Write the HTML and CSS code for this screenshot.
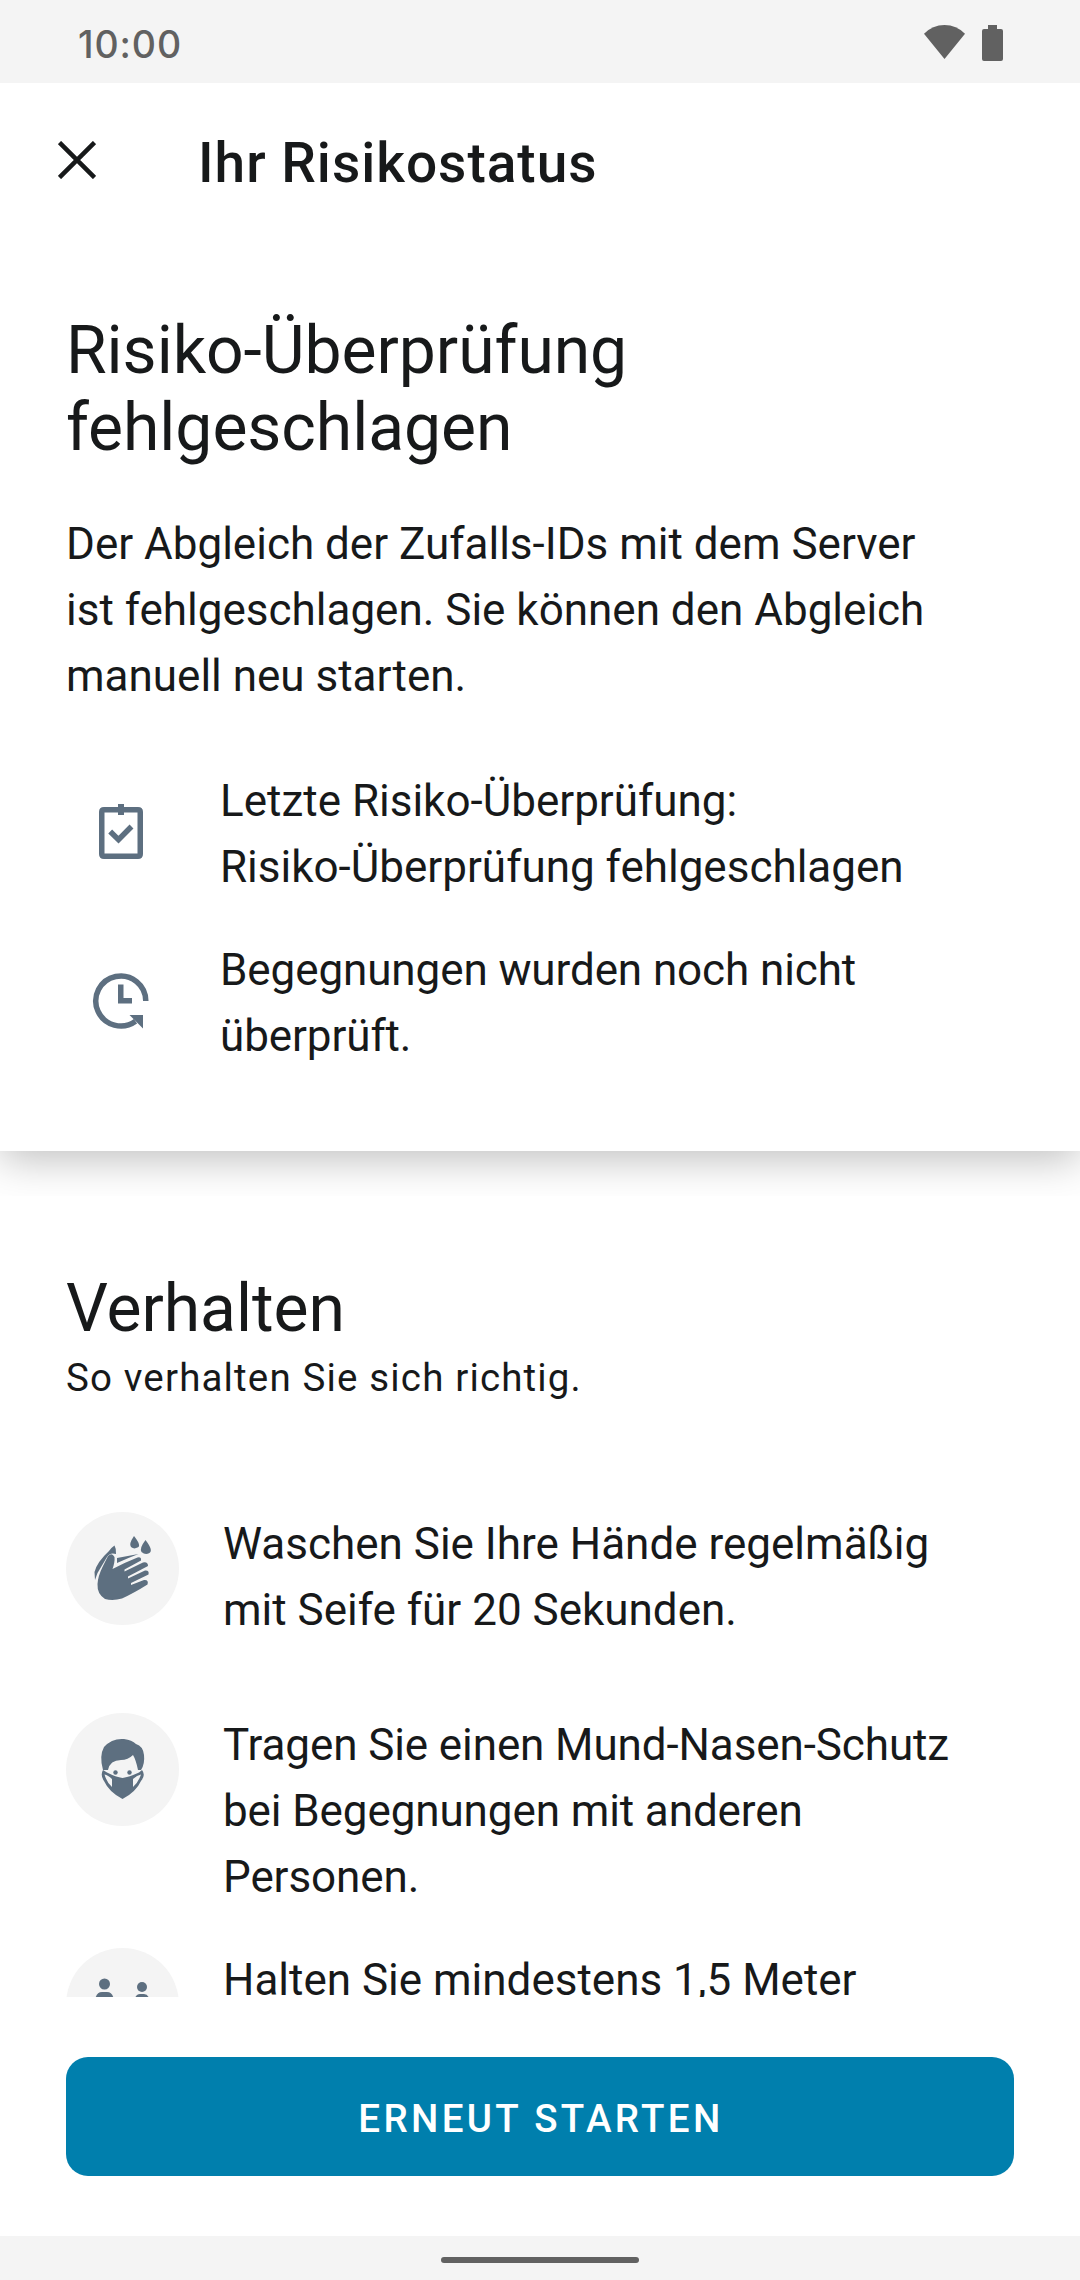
FILE: index.html
```html
<!DOCTYPE html>
<html lang="de">
<head>
<meta charset="utf-8">
<title>Ihr Risikostatus</title>
<link rel="stylesheet" href="styles.css">
</head>
<body>
<div class="screen">
  <div class="statusbar">
    <span class="clock">10:00</span>
    <div class="status-icons">
      <svg width="41" height="34" viewBox="0 0 41 34"><path d="M0 8.800Q8.500 0 20.500 0T41 8.800L20.500 34Z"/></svg>
      <svg width="21" height="36" viewBox="0 0 21 36"><path d="M6 0h9v4h4a2 2 0 0 1 2 2v28a2 2 0 0 1-2 2H2a2 2 0 0 1-2-2V6a2 2 0 0 1 2-2h4z"/></svg>
    </div>
  </div>
  <main class="content">
    <section class="card">
      <header class="toolbar">
        <svg class="close" width="38" height="38" viewBox="0 0 38 38"><path d="M1.500 1.500l35 35M36.500 1.500l-35 35"/></svg>
        <h1 class="title">Ihr Risikostatus</h1>
      </header>
      <h2 class="headline">Risiko-Überprüfung<br>fehlgeschlagen</h2>
      <p class="body">Der Abgleich der Zufalls-IDs mit dem Server<br>ist fehlgeschlagen. Sie können den Abgleich<br>manuell neu starten.</p>
      <div class="info">
        <svg class="info-icon" width="110" height="66" viewBox="0 0 110 66"><path fill-rule="evenodd" d="M38 8h14V5h6v3h14q5 0 5 5v42q0 5-5 5H38q-5 0-5-5V13q0-5 5-5zm0.500 5.500v41h33v-41H58V16h-6v-2.500z"/><path class="line" stroke-width="5.500" d="M44.200 32.500l8.300 8.200L65.500 27.500"/></svg>
        <p class="body">Letzte Risiko-Überprüfung:<br>Risiko-Überprüfung fehlgeschlagen</p>
      </div>
      <div class="info">
        <svg class="info-icon" width="110" height="66" viewBox="0 0 110 66"><path class="line" stroke-width="5.500" d="M79.800 33A25 25 0 1 0 69.500 53.200"/><path d="M63.500 47H77v13.500z"/><path d="M52 16.500h5.500V30H66v5.500H52z"/></svg>
        <p class="body body-tight">Begegnungen wurden noch nicht<br>überprüft.</p>
      </div>
    </section>
    <section class="behavior">
      <h2 class="headline">Verhalten</h2>
      <p class="subtitle">So verhalten Sie sich richtig.</p>
      <div class="tip">
        <svg class="tip-icon" width="113" height="113" viewBox="0 0 113 113"><circle class="disc" cx="56.500" cy="56.500" r="56.500"/>
          <path d="M68 24Q76 34 71.500 35.600Q68 37.500 65 35Q62.500 32 68 24ZM79.500 28Q88 39 83 41.300Q79 43 75.500 40Q73 36.500 79.500 28Z"/>
          <path d="M29 68L28.500 60Q31 50 43 39Q46 35 48.500 33.500Q50.500 37 50 42Q44 40 41 45L31.500 61Z"/>
          <path d="M51 46L72.500 42Q62 46 51 51Z"/>
          <path d="M42 44Q46 40 48.500 45Q49 50 46.500 57Q60 50 71.500 45.500Q75.500 44.500 75 48.500L58.500 57.500V59.500L77 50.500Q82 49.500 82 54L62 64.500V66.500L79 58.500Q83.500 58 82.500 62.500L65 71V73L78 68Q83 67.500 81.500 72.500Q68 81 56 86.500Q47 89 39 87Q31 82 31.500 72Q32 64 36.500 55Z"/>
        </svg>
        <p class="body">Waschen Sie Ihre Hände regelmäßig<br>mit Seife für 20 Sekunden.</p>
      </div>
      <div class="tip tip-mask">
        <svg class="tip-icon" width="113" height="113" viewBox="0 0 113 113"><circle class="disc" cx="56.500" cy="56.500" r="56.500"/>
          <path d="M37 57Q33 43 38 34Q46 25 58 26Q66 27 70 31Q77 33 78 42Q79 51 75 57H72Q70 47 67 42Q62 47 55 47Q44 47 42 57Z"/>
          <circle cx="49.500" cy="59.500" r="2.200"/><circle cx="63.500" cy="59.500" r="2.200"/>
          <path fill-rule="evenodd" d="M37 57Q34 62 38 68Q43 79 56.500 86Q70 79 75 68Q80 62 76 57L73 59.500Q63 64 56.500 65Q50 64 41 59.500ZM38.500 61.500Q42 62 46 66V74Q41 70 38.500 61.500ZM75 61.500Q71 62 67 66V74Q72 70 75 61.500Z"/>
        </svg>
        <p class="body body-tight">Tragen Sie einen Mund-Nasen-Schutz<br>bei Begegnungen mit anderen<br>Personen.</p>
      </div>
      <div class="tip tip-distance">
        <svg class="tip-icon" width="113" height="113" viewBox="0 0 113 113"><circle class="disc" cx="56.500" cy="56.500" r="56.500"/>
          <circle cx="38.500" cy="36" r="5.500"/><path d="M29.500 50Q31 44 36 44h5Q46 44 47.500 50V64h-18z"/>
          <circle cx="76" cy="39" r="5"/><path d="M69 50Q70.500 46 74 46h4Q81.500 46 83 50V62H69z"/>
        </svg>
        <p class="body">Halten Sie mindestens 1,5 Meter</p>
      </div>
    </section>
  </main>
  <footer class="actions"><button class="button">ERNEUT STARTEN</button></footer>
  <div class="navbar"><div class="handle"></div></div>
</div>
</body>
</html>
```
FILE: styles.css
```css
* { box-sizing: border-box; }
body { margin: 0; background: #fff; color: #17191a; font-family: Roboto, sans-serif; }
h1, h2, p { margin: 0; font-weight: 400; white-space: nowrap; }
svg { display: block; flex: none; fill: #5d6f80; }

.screen { width: 1080px; height: 2280px; display: flex; flex-direction: column; overflow: hidden; }

.statusbar { height: 83px; flex: none; display: flex; justify-content: space-between; padding: 0 77px 0 78px; background: #f4f4f4; color: #616161; }
.clock { font: 500 37.500px/83px Inter, sans-serif; padding-top: 3px; letter-spacing: .9px; }
.status-icons { display: flex; gap: 17px; padding-top: 25px; }
.status-icons svg { fill: #616161; }

.content { flex: 1; min-height: 0; overflow: hidden; }
.card { height: 1068px; background: #fff; box-shadow: 0 8px 40px rgba(0, 0, 0, .26); clip-path: inset(0 0 -45px 0); padding: 0 66px; }
.toolbar { height: 154px; margin-left: -8px; display: flex; align-items: center; gap: 102px; }
.close { fill: none; stroke: #17191a; stroke-width: 4.500; }
.title { font-size: 55px; font-weight: 500; line-height: 64px; padding-top: 6px; letter-spacing: 1px; }
.headline { font-size: 66px; line-height: 77px; letter-spacing: -.05px; }
.card .headline { padding-top: 75px; }
.body { font-size: 44px; line-height: 66px; }
.body-tight { letter-spacing: -.1px; }
.card > .body { margin-top: 45px; }
.info { display: flex; align-items: center; gap: 44px; margin-top: 37px; }
.card > .body + .info { margin-top: 59px; }
.info-icon { margin-bottom: 4px; }
.line { fill: none; stroke: #5d6f80; }

.behavior { padding: 119px 66px 0; }
.subtitle { margin-top: 5px; font-size: 38.500px; line-height: 52px; letter-spacing: 1.150px; }
.tip { display: flex; align-items: flex-start; gap: 44px; margin-top: 108px; }
.tip .body { margin: -1px 0 1px; }
.tip-mask { margin-top: 69px; }
.tip-distance { margin-top: 37px; }
.disc { fill: #f4f4f4; }

.actions { flex: none; height: 239px; padding: 60px 66px; }
.button { display: block; width: 100%; height: 119px; border: 0; border-radius: 22px; background: #007fad; color: #fff; font: 500 38.500px Roboto, sans-serif; letter-spacing: 3.350px; padding: 4px 0 0 2px; }
.navbar { flex: none; height: 44px; background: #f4f4f4; display: flex; justify-content: center; padding-top: 21px; }
.handle { width: 198px; height: 6px; border-radius: 3px; background: #616161; }
```
